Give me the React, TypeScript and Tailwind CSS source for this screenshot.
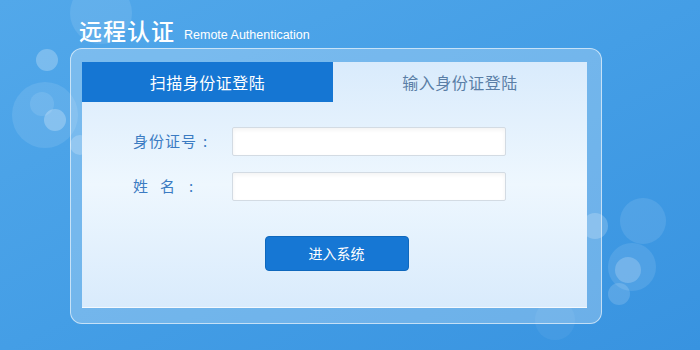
import React from "react";

const bubbles = [
  "left-[70px] top-[-18px] w-[62px] h-[62px] bg-white/10",
  "left-[36px] top-[49px] w-[22px] h-[22px] bg-white/25",
  "left-[12px] top-[82px] w-[66px] h-[66px] bg-white/10",
  "left-[44px] top-[109px] w-[22px] h-[22px] bg-white/25",
  "left-[70px] top-[135px] w-[20px] h-[20px] bg-white/20",
  "left-[30px] top-[92px] w-[24px] h-[24px] bg-white/10",
  "left-[582px] top-[213px] w-[26px] h-[26px] bg-white/20",
  "left-[620px] top-[198px] w-[46px] h-[46px] bg-white/10",
  "left-[608px] top-[243px] w-[48px] h-[48px] bg-white/10",
  "left-[615px] top-[257px] w-[26px] h-[26px] bg-white/20",
  "left-[608px] top-[283px] w-[22px] h-[22px] bg-white/15",
  "left-[535px] top-[300px] w-[40px] h-[40px] bg-white/5",
];

export default function App() {
  return (
    <div className="relative w-[700px] h-[350px] overflow-hidden bg-gradient-to-br from-[#52a8ea] via-[#449ee6] to-[#3893e0] font-['Noto_Sans_CJK_SC','Liberation_Sans',sans-serif]">
      {bubbles.map((b, i) => (
        <div key={i} className={"absolute rounded-full " + b} />
      ))}

      <div className="relative flex flex-col">
        <div className="flex items-end h-[42px] pl-[79px]">
          <span className="text-[23px] leading-none font-medium text-white tracking-[1px]">远程认证</span>
          <span className="ml-[9px] mb-[1px] text-[12.5px] leading-none text-white font-['Liberation_Sans',sans-serif]">
            Remote Authentication
          </span>
        </div>

        <div className="ml-[70px] mt-[6px] w-[532px] h-[276px] rounded-[12px] border border-white/60 bg-white/25 pt-[13px] pl-[11px]">
          <div className="w-[505px] h-[246px] flex flex-col bg-gradient-to-b from-[#d9ebfc] via-[#eef7fe] to-[#d9ebfc] border-b border-white/70">
            <div className="flex h-[40px]">
              <div className="w-[251px] flex items-center justify-center bg-[#1576d3] text-white text-[16px] tracking-[0.5px]">
                扫描身份证登陆
              </div>
              <div className="flex-1 flex items-center justify-center text-[#5a7ea6] text-[16px] tracking-[0.5px]">
                输入身份证登陆
              </div>
            </div>

            <div className="flex flex-col gap-[16px] mt-[25px] pl-[51px]">
              <div className="flex items-center">
                <span className="w-[99px] flex text-[15px] tracking-[1px] text-[#3b7bc2]">
                  身份证号<span className="ml-[6px]">:</span>
                </span>
                <input className="w-[274px] h-[29px] bg-white border border-[#d3dbe3] rounded-[2px] shadow-inner outline-none" />
              </div>
              <div className="flex items-center">
                <span className="w-[99px] flex text-[15px] text-[#3b7bc2]">
                  姓<span className="ml-[12px]">名</span>
                  <span className="ml-[14px]">:</span>
                </span>
                <input className="w-[274px] h-[29px] bg-white border border-[#d3dbe3] rounded-[2px] shadow-inner outline-none" />
              </div>
            </div>

            <div className="flex justify-center mt-[35px] pl-[4px]">
              <button className="w-[144px] h-[35px] rounded-[4px] bg-[#1677d4] border border-[#0f68bd] text-white text-[14px]">
                进入系统
              </button>
            </div>
          </div>
        </div>
      </div>
    </div>
  );
}
